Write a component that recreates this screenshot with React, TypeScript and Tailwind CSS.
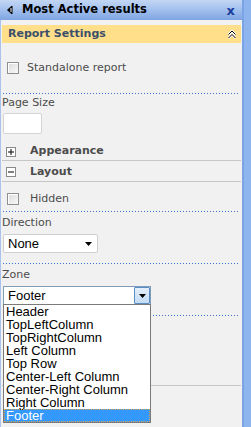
const dotted =
  "h-px mx-[2px] bg-[repeating-linear-gradient(to_right,#3b6fd6_0_1px,transparent_1px_3px)]";

const zones = [
  "Header",
  "TopLeftColumn",
  "TopRightColumn",
  "Left Column",
  "Top Row",
  "Center-Left Column",
  "Center-Right Column",
  "Right Column",
  "Footer",
];

function Check() {
  return (
    <span className="h-[12px] w-[12px] border border-[#8e8f8f] bg-[linear-gradient(135deg,#dcdcdc,#f8f8f8)] shadow-[inset_1px_1px_0_#fff]" />
  );
}

function Toggle({ open }: { open: boolean }) {
  return (
    <span className="flex h-[10px] w-[10px] items-center justify-center border border-[#8a8a8a] bg-white">
      <svg width="8" height="8" viewBox="0 0 8 8">
        <path d="M1 4h6" stroke="#000" strokeWidth="1" />
        {!open && <path d="M4 1v6" stroke="#000" strokeWidth="1" />}
      </svg>
    </span>
  );
}

function Caret() {
  return (
    <svg width="7" height="4" viewBox="0 0 7 4">
      <path d="M0 0h7L3.5 4z" fill="#000" />
    </svg>
  );
}

export default function App() {
  return (
    <div className="flex h-[427px] w-[251px] overflow-hidden bg-[#f1f1f1] font-['DejaVu_Sans',sans-serif] text-[11px] text-[#4c4c4c]">
      <div className="relative flex w-[242px] flex-col">
        {/* title bar */}
        <div className="flex h-[20px] items-center bg-[linear-gradient(#c3d7f4,#a5c1ee_45%,#7ea5e2)] pl-[6px] pr-[7px]">
          <svg width="7" height="10" viewBox="0 0 7 10" className="mr-[9px]">
            <path d="M6 1L1.5 5 6 9z" fill="#000" stroke="#000" strokeWidth="1" />
            <path d="M5 3v4" stroke="#fff" strokeWidth="1" />
          </svg>
          <span className="text-[11.5px] font-bold text-black">Most Active results</span>
          <span className="ml-auto text-[13px] font-bold leading-none text-[#1b3d9b]">x</span>
        </div>

        <div className="flex flex-1 flex-col border-l border-[#a9c3ec] pt-[5px]">
          <div className="mx-[1px] flex h-[18px] items-center bg-[#ffdf8a] pl-[6px] pr-[5px]">
            <span className="font-bold text-[#3c4f6a]">Report Settings</span>
            <svg width="8" height="9" viewBox="0 0 8 9" className="ml-auto">
              <path d="M0.5 4.5L4 1l3.5 3.5M0.5 8L4 4.5 7.5 8" fill="none" stroke="#fff" strokeWidth="2.2" />
              <path d="M0.5 4.5L4 1l3.5 3.5M0.5 8L4 4.5 7.5 8" fill="none" stroke="#000" strokeWidth="1" />
            </svg>
          </div>

          <label className="ml-[6px] mt-[19px] flex h-[12px] items-center gap-[8px]">
            <Check />
            <span>Standalone report</span>
          </label>

          <div className={`${dotted} mt-[19px]`} />
          <div className="ml-[1px] mt-[2px] leading-[14px]">Page Size</div>
          <div className="ml-[2px] mt-[3px] h-[21px] w-[39px] rounded-[2px] border border-[#d4d4d4] bg-white" />

          <div className="ml-[5px] mt-[9px] flex h-[17px] items-center gap-[14px]">
            <Toggle open={false} />
            <span className="font-bold">Appearance</span>
          </div>
          <div className="mx-[1px] h-px bg-[#c6c6c6]" />
          <div className="ml-[5px] mt-[2px] flex h-[18px] items-center gap-[14px]">
            <Toggle open={true} />
            <span className="font-bold">Layout</span>
          </div>
          <div className="mx-[1px] h-px bg-[#c6c6c6]" />

          <label className="ml-[6px] mt-[11px] flex h-[12px] items-center gap-[11px]">
            <Check />
            <span>Hidden</span>
          </label>

          <div className={`${dotted} mt-[6px]`} />
          <div className="ml-[1px] mt-[4px] leading-[14px]">Direction</div>
          <div className="ml-[2px] mt-[4px] flex h-[19px] w-[95px] items-center rounded-[2px] border border-[#cfcfcf] bg-white pl-[4px] pr-[5px] font-['Liberation_Sans',sans-serif] text-[13px] text-black">
            <span>None</span>
            <span className="ml-auto flex">
              <Caret />
            </span>
          </div>

          <div className={`${dotted} mt-[10px]`} />
          <div className="ml-[1px] mt-[4px] leading-[14px]">Zone</div>
          <div className="ml-[2px] mt-[4px] flex h-[19px] w-[148px] items-stretch border border-[#7f9db9] bg-white font-['Liberation_Sans',sans-serif] text-[13px] text-black">
            <span className="flex flex-1 items-center pl-[4px]">Footer</span>
            <span className="flex w-[16px] items-center justify-center rounded-[1px] border border-[#5a8cc6] bg-[linear-gradient(#e3eefb,#c4dbf4)]">
              <Caret />
            </span>
          </div>

          <div className={`${dotted} mt-[10px]`} />
          <div className="mx-[1px] mt-[69px] h-px bg-[#c6c6c6]" />
        </div>

        {/* open zone list */}
        <ul className="absolute left-[3px] top-[304px] w-[148px] border border-[#7a7a7a] bg-white font-['Liberation_Sans',sans-serif] text-[13px] leading-[13px] text-black">
          {zones.map((z) => (
            <li
              key={z}
              className={
                z === "Footer"
                  ? "h-[13px] bg-[#3399ff] pl-[2px] text-white outline-1 -outline-offset-1 outline-dotted outline-[#d9a350]"
                  : "h-[13px] pl-[2px]"
              }
            >
              {z}
            </li>
          ))}
        </ul>
      </div>

      <div className="w-[9px] border-l-2 border-[#7aa4e6] bg-[#8fb5ee]" />
    </div>
  );
}
